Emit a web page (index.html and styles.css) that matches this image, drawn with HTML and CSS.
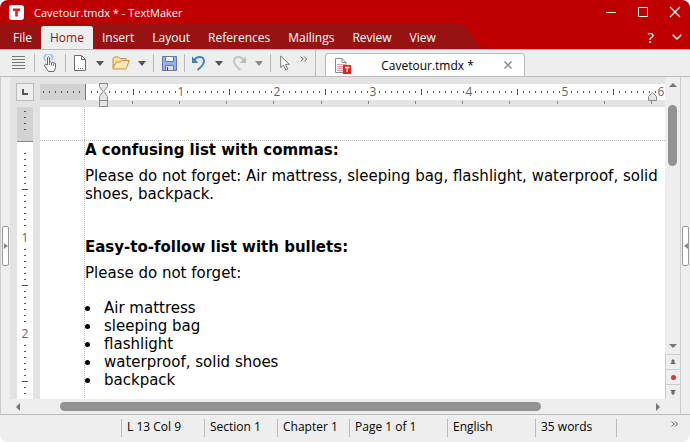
FILE: index.html
```html
<!DOCTYPE html>
<html lang="en">
<head>
    <meta charset="UTF-8">
    <meta name="viewport" content="width=device-width, initial-scale=1.0">
    <title>Cavetour.tmdx * - TextMaker</title>
    <link rel="stylesheet" href="styles.css">
</head>
<body>
    <div class="window">
        <header class="header">
            <div class="titlebar">
                <svg class="logo" width="15" height="15" viewBox="0 0 15 15">
                    <rect width="15" height="15" rx="3" fill="#fff"/>
                    <path d="M4 3.500h7v2.400H8.800V11.500H6.200V5.900H4z" fill="#e02020"/>
                </svg>
                <h1 class="title">Cavetour.tmdx * - TextMaker</h1>
                <div class="window-buttons">
                    <button aria-label="Minimize"><svg width="12" height="12" viewBox="0 0 12 12"><path d="M1 6.500h10" stroke="#fff"/></svg></button>
                    <button aria-label="Maximize"><svg width="12" height="12" viewBox="0 0 12 12"><path d="M1.500 1.500h9v9h-9z" stroke="#fff" fill="none"/></svg></button>
                    <button aria-label="Close"><svg width="12" height="12" viewBox="0 0 12 12"><path d="M1 1l10 10M11 1L1 11" stroke="#fff" stroke-width="1.200"/></svg></button>
                </div>
            </div>
            <div class="menubar">
                <nav class="menu">
                    <button>File</button>
                    <button class="active">Home</button>
                    <button>Insert</button>
                    <button>Layout</button>
                    <button>References</button>
                    <button>Mailings</button>
                    <button>Review</button>
                    <button>View</button>
                </nav>
                <svg class="curve" width="30" height="25" viewBox="0 0 30 25"><path d="M0 0C15 1 14 25 30 25H0z" fill="#981212"/></svg>
                <div class="help">
                    <button class="question" aria-label="Help">?</button>
                    <button aria-label="Hide ribbon"><svg width="10" height="6" viewBox="0 0 10 6"><path d="M.7.7L5 5 9.300.7" stroke="#fff" stroke-width="1.400" fill="none"/></svg></button>
                </div>
            </div>
        </header>

        <div class="toolbar">
            <div class="tools">
                <button class="tool first" aria-label="Menu"><svg width="13" height="14" viewBox="0 0 13 14"><path d="M0 .5h13M0 3.500h13M0 6.500h13M0 9.500h13M0 12.500h13" stroke="#777"/></svg></button>
                <span class="sep"></span>
                <button class="tool wide" aria-label="Touch mode"><svg width="14" height="18" viewBox="0 0 14 18">
                    <path d="M2.500 6.500A4 4 0 1 1 9 5.500" stroke="#9dbcf0" stroke-width="1.600" fill="none"/>
                    <path d="M4.500 11V3.500q1-1.500 2 0V8q1.500-.8 2 .5 1.500-.8 2 .5 2-.5 2 1v3.500L11 17.500H5.500L2 12.500q-1.200-2 .5-2.200z" fill="#fff" stroke="#666"/>
                    <path d="M6.500 8v3M8.500 9v2.500M10.500 9.500V12" stroke="#777"/></svg></button>
                <span class="sep"></span>
                <button class="tool" aria-label="New"><svg width="12" height="16" viewBox="0 0 12 16">
                    <path d="M.5.5h7l4 4v11H.5z" fill="#fff" stroke="#6c6c6c"/><path d="M7.500.5v4h4" fill="none" stroke="#6c6c6c"/>
                    <path d="M4 13.500h1M6 13.500h1M8 13.500h1" stroke="#666"/></svg></button>
                <button class="tool drop" aria-label="New options"><svg width="8" height="5" viewBox="0 0 8 5"><path d="M0 0h8L4 5z" fill="#555"/></svg></button>
                <button class="tool wide" aria-label="Open"><svg width="18" height="14" viewBox="0 0 18 14">
                    <path d="M1 12V2.500L2.500 1h4L8 2.500h6V5" fill="#fbdca4" stroke="#c98f3f"/>
                    <path d="M.8 12.500L4.500 6H8l1.500-1.500h7.800L14.500 12l-1 1H1.500z" fill="#ffe6b3" stroke="#c98f3f"/></svg></button>
                <button class="tool drop" aria-label="Open options"><svg width="8" height="5" viewBox="0 0 8 5"><path d="M0 0h8L4 5z" fill="#555"/></svg></button>
                <span class="sep after-drop"></span>
                <button class="tool wide" aria-label="Save"><svg width="15" height="15" viewBox="0 0 15 15">
                    <path d="M.5.5h14v14H.5z" fill="#8fb0fa" stroke="#6a74a8"/>
                    <path d="M3.500.5h8v5h-8z" fill="#f4f4f4" stroke="#6a74a8"/>
                    <path d="M3.500 9.500h8v5h-8z" fill="#e0e0e0" stroke="#6a74a8"/><path d="M5.500 11v3.500" stroke="#445"/></svg></button>
                <span class="sep"></span>
                <button class="tool" aria-label="Undo"><svg width="14" height="16" viewBox="0 0 14 16">
                    <path d="M2 5.500C5 .5 12 1 12 6.500c0 3-2.500 5-6.500 8.500" stroke="#4b86b8" stroke-width="2" fill="none"/><path d="M0 1.500V8h6.500z" fill="#3f7fb5"/></svg></button>
                <button class="tool drop" aria-label="Undo options"><svg width="8" height="5" viewBox="0 0 8 5"><path d="M0 0h8L4 5z" fill="#555"/></svg></button>
                <button class="tool" aria-label="Redo"><svg width="14" height="16" viewBox="0 0 14 16">
                    <path d="M12 5.500C9 .5 2 1 2 6.500c0 3 2.500 5 6.500 8.500" stroke="#c4c4c4" stroke-width="2" fill="none"/><path d="M14 1.500V8H7.500z" fill="#bdbdbd"/></svg></button>
                <button class="tool drop" aria-label="Redo options"><svg width="8" height="5" viewBox="0 0 8 5"><path d="M0 0h8L4 5z" fill="#888"/></svg></button>
                <span class="sep after-drop"></span>
                <button class="tool" aria-label="Select objects"><svg width="10" height="16" viewBox="0 0 10 16"><path d="M.7 1v11.500l2.800-2.500 2.300 5 1.900-.9-2.200-4.800h3.800z" fill="#fff" stroke="#777"/></svg></button>
                <button class="tool more" aria-label="More tools"><svg width="8" height="6" viewBox="0 0 8 6"><path d="M.7.5L3.200 3 .7 5.500M4.200.5L6.700 3 4.200 5.500" stroke="#666" fill="none"/></svg></button>
            </div>
            <div class="tab">
                <svg width="17" height="17" viewBox="0 0 17 17">
                    <path d="M1.500 1.500h6.500l4 4v10H1.500z" fill="#fff" stroke="#8a8a8a"/><path d="M8 1.500v4h4" fill="none" stroke="#8a8a8a"/>
                    <path d="M3 7.500h8M3 9.500h6M3 11.500h6M3 13.500h6" stroke="#ee9a9a"/>
                    <path d="M9 8h8v9H9z" fill="#d22"/><path d="M11 10.500h4.500M13.200 10.500v4.500" stroke="#fff" stroke-width="1.300"/></svg>
                <span class="tab-name">Cavetour.tmdx *</span>
                <button aria-label="Close tab"><svg width="8" height="8" viewBox="0 0 8 8"><path d="M.5.5l7 7M7.500.5l-7 7" stroke="#888" stroke-width="1.500"/></svg></button>
            </div>
        </div>

        <main class="work">
            <div class="side left"><button class="handle" aria-label="Show left sidebar"><svg width="4" height="6" viewBox="0 0 4 6"><path d="M0 0v6l4-3z" fill="#888"/></svg></button></div>
            <div class="editor">
                <div class="desk">
                    <button class="tabstop" aria-label="Tab type"><svg width="6" height="6" viewBox="0 0 6 6"><path d="M1 0v5h5" stroke="#555" stroke-width="2" fill="none"/></svg></button>
                    <svg class="ruler-h" height="24">
                        <defs>
                            <pattern id="inch" x="45" width="96" height="24" patternUnits="userSpaceOnUse">
                                <path d="M6 9h1M12 9h1M18 9h1M24 9h1M30 9h1M36 9h1M42 9h1M54 9h1M60 9h1M66 9h1M72 9h1M78 9h1M84 9h1M90 9h1" stroke="#555" stroke-width="2"/>
                                <path d="M48.500 6v6" stroke="#555"/>
                            </pattern>
                        </defs>
                        <rect y="1" width="100%" height="16" fill="#fff"/>
                        <rect y="1" width="45" height="16" fill="#d2d2d2"/>
                        <rect width="100%" height="24" fill="url(#inch)"/>
                        <path d="M45.500 1v16" stroke="#777"/>
                        <g class="num">
                            <text x="141" y="13">1</text>
                            <text x="237" y="13">2</text>
                            <text x="333" y="13">3</text>
                            <text x="429" y="13">4</text>
                            <text x="525" y="13">5</text>
                            <text x="621" y="13">6</text>
                        </g>
                        <path d="M92.500 18v3M139.500 18v3M186.500 18v3M233.500 18v3M281.500 18v3M328.500 18v3M375.500 18v3M422.500 18v3M469.500 18v3M517.500 18v3M564.500 18v3M611.500 18v3" stroke="#888"/>
                        <path d="M59.500.5h8v3L64 8.500l3.500 5v10h-8v-10l3.500-5-3.500-5zM59.500 17.500h8" fill="#e6e6e6" stroke="#888"/>
                        <path d="M608.500 17.500v-4l4-4 4 4v4z" fill="#e6e6e6" stroke="#888"/>
                    </svg>
                    <svg class="ruler-v" width="16">
                        <defs>
                            <pattern id="inch-v" y="34" width="16" height="96" patternUnits="userSpaceOnUse">
                                <path d="M7 12.500h2M7 18.500h2M7 24.500h2M7 30.500h2M7 36.500h2M7 42.500h2M5 48.500h6M7 54.500h2M7 60.500h2M7 66.500h2M7 72.500h2M7 78.500h2M7 84.500h2" stroke="#555"/>
                            </pattern>
                        </defs>
                        <rect width="16" height="100%" fill="#fff"/>
                        <rect width="16" height="34" fill="#d2d2d2"/>
                        <rect width="16" height="100%" fill="url(#inch-v)"/>
                        <path d="M0 34.500h16" stroke="#888"/>
                        <g class="num">
                            <text x="8" y="135">1</text>
                            <text x="8" y="231">2</text>
                        </g>
                    </svg>
                    <article class="page">
                        <h2>A confusing list with commas:</h2>
                        <p>Please do not forget: Air mattress, sleeping bag, flashlight, waterproof, solid shoes, backpack.</p>
                        <h2 class="second">Easy-to-follow list with bullets:</h2>
                        <p>Please do not forget:</p>
                        <ul>
                            <li>Air mattress</li>
                            <li>sleeping bag</li>
                            <li>flashlight</li>
                            <li>waterproof, solid shoes</li>
                            <li>backpack</li>
                        </ul>
                    </article>
                </div>
                <div class="scroll-v">
                    <button aria-label="Scroll up"><svg width="8" height="4" viewBox="0 0 8 4"><path d="M0 4h8L4 0z" fill="#777"/></svg></button>
                    <div class="track"><div class="thumb"></div></div>
                    <button aria-label="Scroll down"><svg width="8" height="4" viewBox="0 0 8 4"><path d="M0 0h8L4 4z" fill="#777"/></svg></button>
                    <button class="jump" aria-label="Previous"><svg width="6" height="6" viewBox="0 0 6 6"><path d="M3 0L.5 2.500h5zM3 2L0 5h6z" fill="#666"/></svg></button>
                    <button class="jump" aria-label="Browse by"><span class="dot"></span></button>
                    <button class="jump" aria-label="Next"><svg width="6" height="6" viewBox="0 0 6 6"><path d="M0 1h6L3 4zM.5 3.500h5L3 6z" fill="#666"/></svg></button>
                </div>
                <div class="scroll-h">
                    <button aria-label="Scroll left"><svg width="4" height="8" viewBox="0 0 4 8"><path d="M4 0v8L0 4z" fill="#777"/></svg></button>
                    <div class="track"><div class="thumb"></div></div>
                    <button aria-label="Scroll right"><svg width="4" height="8" viewBox="0 0 4 8"><path d="M0 0v8l4-4z" fill="#777"/></svg></button>
                </div>
            </div>
            <div class="side right"><button class="handle" aria-label="Show right sidebar"><svg width="4" height="6" viewBox="0 0 4 6"><path d="M4 0v6L0 3z" fill="#888"/></svg></button></div>
        </main>

        <footer class="status">
            <span class="cell blank"></span>
            <span class="cell position">L 13 Col 9</span>
            <span class="cell section">Section 1</span>
            <span class="cell chapter">Chapter 1</span>
            <span class="cell pages">Page 1 of 1</span>
            <span class="cell language">English</span>
            <span class="cell words">35 words</span>
            <span class="cell rest"></span>
            <button aria-label="More"><svg width="8" height="6" viewBox="0 0 8 6"><path d="M.7.5L3.200 3 .7 5.500M4.200.5L6.700 3 4.200 5.500" stroke="#666" fill="none"/></svg></button>
        </footer>
    </div>
</body>
</html>
```
FILE: styles.css
```css
* {
    box-sizing: border-box;
}
body {
    margin: 0;
    background-color: #fff;
    font-family: "Open Sans", "Noto Sans", sans-serif;
    font-size: 12px;
    color: #000;
}
button {
    display: flex;
    align-items: center;
    justify-content: center;
    padding: 0;
    border: none;
    background: none;
    font: inherit;
    color: inherit;
}
svg {
    display: block;
    flex: none;
}
.window {
    display: flex;
    flex-direction: column;
    height: 100vh;
    background-color: #eee;
    border-radius: 8px;
    overflow: hidden;
}

/* title and menu */
.header {
    background-color: #be0000;
    color: #fff;
    border-bottom: 1px solid #bbb;
}
.titlebar {
    display: flex;
    align-items: center;
    height: 24px;
    padding: 0 9px;
}
.title {
    flex: 1;
    margin: 0 0 0 10px;
    font-size: 11px;
    font-weight: 400;
}
.window-buttons {
    display: flex;
    gap: 20px;
}
.menubar {
    display: flex;
    height: 25px;
}
.menu {
    display: flex;
    align-items: flex-end;
    width: 458px;
    padding-left: 4px;
    background-color: #981212;
}
.menu button {
    height: 23px;
    padding: 0 9px;
}
.menu .active {
    background-color: #eee;
    color: #981212;
    border-radius: 3px 3px 0 0;
}
.help {
    display: flex;
    align-items: center;
    gap: 18px;
    margin-left: auto;
    padding-right: 8px;
}
.question {
    font-size: 15px;
}

/* toolbar */
.toolbar {
    display: flex;
    align-items: flex-end;
    height: 27px;
    border-bottom: 1px solid #bbb;
}
.tools {
    display: flex;
    align-items: center;
    height: 26px;
    width: 316px;
    border-right: 1px solid #bbb;
}
.tool {
    width: 28px;
    height: 26px;
}
.tool.first {
    width: 34px;
    padding-left: 2px;
}
.tool.wide {
    width: 30px;
}
.tool.drop {
    width: 12px;
}
.tool.more {
    width: 10px;
    height: 18px;
    align-self: flex-start;
}
.sep {
    width: 1px;
    height: 18px;
    background-color: #bbb;
}
.sep.after-drop {
    margin-left: 5px;
}
.tab {
    display: flex;
    align-items: center;
    width: 200px;
    height: 23px;
    margin-left: 9px;
    padding: 0 12px 0 8px;
    background-color: #fff;
    border: 1px solid #bbb;
    border-bottom: none;
    border-radius: 4px 4px 0 0;
}
.tab-name {
    flex: 1;
    text-align: center;
}

/* work area */
.work {
    display: flex;
    flex: 1;
    min-height: 0;
}
.side {
    display: flex;
    align-items: center;
    width: 10px;
    padding-left: 1px;
    border-left: 1px solid #ccc;
}
.handle {
    width: 7px;
    height: 40px;
    background-color: #fff;
    border: 1px solid #999;
    border-radius: 2px;
}
.editor {
    display: grid;
    grid-template-columns: 1fr 15px;
    grid-template-rows: 1fr 15px;
    flex: 1;
    min-width: 0;
}
.desk {
    display: grid;
    grid-template-columns: 18px 1fr;
    grid-template-rows: 24px 1fr;
    column-gap: 6px;
    min-height: 0;
    padding: 6px 0 0 6px;
    background-color: #e3e3e3;
}
.tabstop {
    width: 18px;
    height: 18px;
    background-color: #eee;
    border: 1px solid #bbb;
}
.ruler-h {
    width: 100%;
}
.ruler-v {
    height: 100%;
    margin-left: 1px;
}
.num {
    font-size: 12px;
    fill: #666;
    text-anchor: middle;
}
.page {
    padding: 34px 0 0 45px;
    background:
        repeating-linear-gradient(to right, #bbb 0 1px, #fff 1px 2px) 0 33px / 100% 1px no-repeat,
        repeating-linear-gradient(to bottom, #bbb 0 1px, #fff 1px 2px) 44px 0 / 1px 100% no-repeat,
        #fff;
    font-family: "DejaVu Sans", Verdana, sans-serif;
    font-size: 15px;
    line-height: 18px;
    overflow: hidden;
}
.page h2 {
    margin: 0 0 8px;
    font-size: 15px;
}
.page .second {
    margin-top: 35px;
}
.page p {
    margin: 0;
}
.page ul {
    margin: 17px 0 0;
    padding: 0;
    list-style: none;
}
.page li {
    display: flex;
    align-items: center;
    gap: 14px;
}
.page li::before {
    content: "";
    width: 5px;
    height: 5px;
    border-radius: 50%;
    background-color: #000;
}

/* scrollbars */
.scroll-v {
    display: flex;
    flex-direction: column;
}
.scroll-v > button {
    height: 16px;
    flex: none;
}
.scroll-v .track {
    flex: 1;
    padding: 12px 3px 0;
}
.scroll-v .thumb {
    width: 9px;
    height: 61px;
    border-radius: 5px;
    background-color: #929292;
}
.scroll-v .jump {
    height: 15px;
    border: 1px solid #ccc;
    border-right: none;
    border-bottom: none;
}
.dot {
    width: 5px;
    height: 5px;
    border-radius: 50%;
    background-color: #d33;
}
.scroll-h {
    display: flex;
    align-items: center;
    padding: 0 5px 0 6px;
}
.scroll-h .track {
    flex: 1;
    padding: 0 115px 0 40px;
}
.scroll-h .thumb {
    height: 9px;
    border-radius: 5px;
    background-color: #929292;
}

/* status bar */
.status {
    display: flex;
    height: 28px;
    padding: 4px 11px 0 0;
    border-top: 1px solid #bbb;
}
.cell {
    height: 18px;
    padding-left: 5px;
    border-left: 1px solid #bbb;
    line-height: 16px;
    white-space: nowrap;
}
.blank {
    width: 121px;
    border-left: none;
}
.position {
    width: 83px;
}
.section {
    width: 73px;
}
.chapter {
    width: 72px;
}
.pages {
    width: 98px;
}
.language {
    width: 88px;
}
.words {
    width: 81px;
}
.rest {
    flex: 1;
}
.status button {
    height: 10px;
}
```
